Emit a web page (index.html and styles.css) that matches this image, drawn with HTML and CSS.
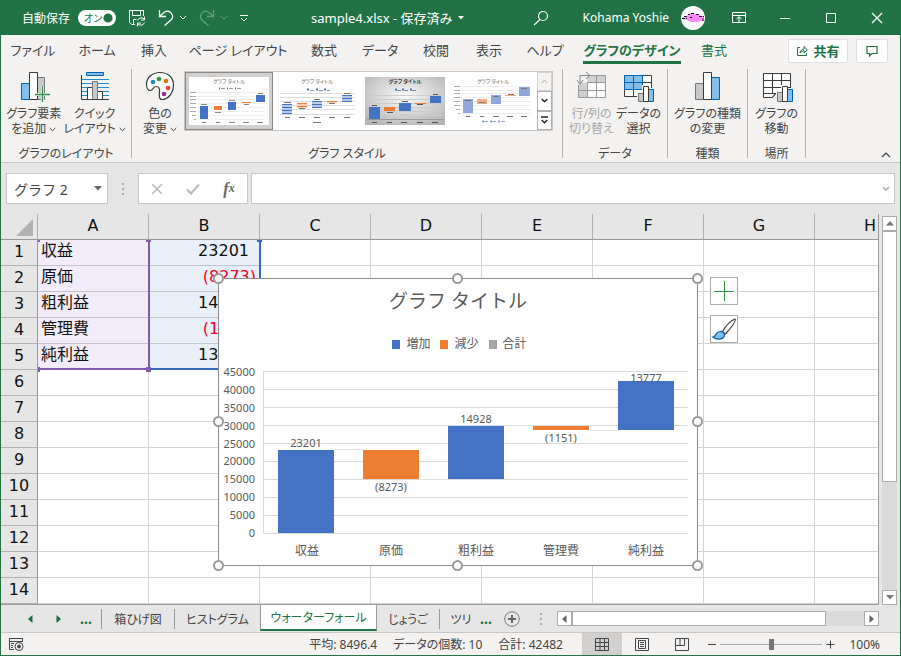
FILE: index.html
```html
<!DOCTYPE html>
<html lang="ja">
<head>
    <meta charset="UTF-8">
    <meta name="viewport" content="width=device-width, initial-scale=1.0">
    <title>sample4.xlsx</title>
    <link rel="stylesheet" href="styles.css">
</head>
<body>
    <div class="window">
        <!-- Title bar -->
        <header class="title-bar">
            <div class="quick-access">
                <label for="autosave">自動保存</label>
                <span class="toggle">
                    <input type="checkbox" id="autosave" checked>
                    <span class="toggle-text">オン</span>
                </span>
                <button class="qa-button" aria-label="上書き保存">
                    <svg width="18" height="18" viewBox="0 0 18 18" fill="none" stroke="#fff">
                        <path d="M7 15.5H3.5L1.500 13.500V1.500H15.500V7M4.500 1.500V6.500H12.500V1.500M5.500 15.500V10.500H8.500"/>
                        <path d="M9.500 11.500A4 4 0 0 1 16.500 10.500M16.500 7.500V11H13M16.500 13.500A4 4 0 0 1 9.500 14.500M9.500 17.500V14H13"/>
                    </svg>
                </button>
                <button class="qa-button undo" aria-label="元に戻す">
                    <svg width="16" height="18" viewBox="0 0 16 18" fill="none" stroke="#fff" stroke-width="1.3">
                        <path d="M1.500 1V7.500H8M1.500 7.500L6 3.500C12 -0.500 17.500 7 12.500 11.500L6.500 16.500"/>
                    </svg>
                    <svg width="8" height="6" viewBox="0 0 8 6" fill="none" stroke="#fff"><path d="M1 1L4 4L7 1"/></svg>
                </button>
                <button class="qa-button redo" aria-label="やり直し" disabled>
                    <svg width="16" height="18" viewBox="0 0 16 18" fill="none" stroke="#fff" stroke-width="1.3">
                        <path d="M14.500 1V7.500H8M14.500 7.500L10 3.500C4 -0.500 -1.500 7 3.500 11.500L9.500 16.500"/>
                    </svg>
                    <svg width="8" height="6" viewBox="0 0 8 6" fill="none" stroke="#fff"><path d="M1 1L4 4L7 1"/></svg>
                </button>
                <button class="qa-button" aria-label="クイック アクセス ツール バーのカスタマイズ">
                    <svg width="8" height="8" viewBox="0 0 8 8" fill="none" stroke="#fff"><path d="M0 1.500H8M1 4L4 7L7 4"/></svg>
                </button>
            </div>
            <button class="doc-title">sample4.xlsx - 保存済み
                <svg width="6" height="4" viewBox="0 0 6 4"><path d="M0 0H6L3 3.500Z" fill="#fff"/></svg>
            </button>
            <div class="window-tools">
                <button class="search" aria-label="検索">
                    <svg width="16" height="16" viewBox="0 0 16 16" fill="none" stroke="#fff" stroke-width="1.200"><circle cx="10" cy="6" r="4.500"/><path d="M7 9.500L1 15"/></svg>
                </button>
                <span class="user-name">Kohama Yoshie</span>
                <svg class="avatar" width="24" height="24" viewBox="0 0 24 24">
                    <circle cx="12" cy="12" r="12" fill="#fff"/>
                    <path d="M1 12L6 10L8 8H16L18 9L23 11V14L17 16H10L6 14L1 13Z" fill="#f8f"/>
                    <path d="M1 12.500H6M3 10.500H7M7 8.500H9M10 7.500H13M15 8.500H19M18 10.500H23M9 11.500H11M22 12.500V15" stroke="#111" fill="none" stroke-dasharray="3 1"/>
                </svg>
                <div class="window-buttons">
                    <button aria-label="リボンの表示オプション">
                        <svg width="14" height="12" viewBox="0 0 14 12" fill="none" stroke="#fff"><path d="M.5 .5H13.500V10.500H.5ZM.5 3.500H13.500M7 10V5M4.500 7L7 4.700L9.500 7"/></svg>
                    </button>
                    <button aria-label="最小化">
                        <svg width="12" height="12" viewBox="0 0 12 12"><path d="M1 6.500H11" stroke="#fff"/></svg>
                    </button>
                    <button aria-label="最大化">
                        <svg width="12" height="12" viewBox="0 0 12 12"><path d="M1.500 1.500H10.500V10.500H1.500Z" fill="none" stroke="#fff"/></svg>
                    </button>
                    <button aria-label="閉じる">
                        <svg width="12" height="12" viewBox="0 0 12 12"><path d="M1 1L11 11M11 1L1 11" stroke="#fff" stroke-width="1.200"/></svg>
                    </button>
                </div>
            </div>
        </header>

        <!-- Ribbon tabs -->
        <nav class="ribbon-tabs">
            <div class="tab-list">
                <button>ファイル</button>
                <button>ホーム</button>
                <button>挿入</button>
                <button>ページ レイアウト</button>
                <button>数式</button>
                <button>データ</button>
                <button>校閲</button>
                <button>表示</button>
                <button>ヘルプ</button>
                <button class="active"><span>グラフのデザイン</span></button>
                <button class="context">書式</button>
            </div>
            <button class="share-button">
                <svg width="13" height="12" viewBox="0 0 13 12" fill="none" stroke="#217346"><path d="M4 2.500H1.500V10.500H10.500V8M4 8C4.500 5 6.500 4 8 4V1.500L11.500 4.800L8 8V6C6.500 6 5 6.500 4 8Z"/></svg>
                共有
            </button>
            <button class="comment-button" aria-label="コメント">
                <svg width="12" height="12" viewBox="0 0 12 12" fill="none" stroke="#217346" stroke-width="1.200"><path d="M1 1.500H11V8.500H6L3.500 11V8.500H1Z"/></svg>
            </button>
        </nav>

        <!-- Ribbon -->
        <section class="ribbon">
            <div class="group group-layout">
                <div class="group-body">
                    <button class="big-button">
                        <svg width="32" height="32" viewBox="0 0 32 32">
                            <path d="M19.500 6.500H26.500V28.500H19.500Z" fill="#c8c8c8" stroke="#777"/>
                            <path d="M3.500 12.500H11.500V28.500H3.500Z" fill="#83beec" stroke="#0063b1"/>
                            <path d="M11.500 1.500H19.500V28.500H11.500Z" fill="#fff" stroke="#3a3a38"/>
                            <path d="M24.500 15V31M17 23.500H32" stroke="#f3f2f1" stroke-width="3"/>
                            <path d="M24.500 15V31M17 23.500H32" stroke="#309048" stroke-width="1.300"/>
                        </svg>
                        <span>グラフ要素<br>を追加 <svg class="chev" width="7" height="5" viewBox="0 0 7 5"><path d="M.7 1L3.500 3.700L6.300 1"/></svg></span>
                    </button>
                    <button class="big-button">
                        <svg width="32" height="32" viewBox="0 0 32 32">
                            <path d="M7.500 1.500H24.500V4.500H7.500Z" fill="#83beec" stroke="#0063b1"/>
                            <path d="M3 8.500H30M3 12.500H30M3 16.500H30M3 20.500H30M3 24.500H30" stroke="#1e8bcd"/>
                            <path d="M8.500 16.500H13.500V28.500H8.500ZM18.500 20.500H23.500V28.500H18.500Z" fill="#fff" stroke="#3a3a38"/>
                            <path d="M13.500 10.500H18.500V28.500H13.500Z" fill="#c8c8c8" stroke="#777"/>
                            <path d="M2.500 4V28.500H30" fill="none" stroke="#3a3a38"/>
                        </svg>
                        <span>クイック<br>レイアウト <svg class="chev" width="7" height="5" viewBox="0 0 7 5"><path d="M.7 1L3.500 3.700L6.300 1"/></svg></span>
                    </button>
                </div>
                <div class="group-name">グラフのレイアウト</div>
            </div>

            <div class="group group-styles">
                <div class="group-body">
                    <button class="big-button">
                        <svg width="32" height="32" viewBox="0 0 32 32">
                            <path d="M16 1.500C8 1.500 2.500 7 2.500 13C2.500 18 4 19.500 6.500 19.500C9 19.500 9 15.500 12 15.500C15 15.500 16 18 15.500 21C15 25 15 28.500 18 28.500C24 28.500 29.500 22 29.500 14C29.500 6.500 24 1.500 16 1.500Z" fill="#fff" stroke="#3a3a38" stroke-width="1.200"/>
                            <circle cx="9" cy="11" r="2.300" fill="#1e8bcd"/>
                            <circle cx="15" cy="8" r="2.300" fill="#309048"/>
                            <circle cx="22" cy="10" r="2.300" fill="#e07000"/>
                            <circle cx="24" cy="17" r="2.300" fill="#ed3d3b"/>
                            <circle cx="20" cy="23" r="2.300" fill="#92319e"/>
                        </svg>
                        <span>色の<br>変更 <svg class="chev" width="7" height="5" viewBox="0 0 7 5"><path d="M.7 1L3.500 3.700L6.300 1"/></svg></span>
                    </button>
                    <div class="gallery">
                        <button class="style-thumb selected" aria-label="スタイル 1">
                            <svg width="80" height="48" viewBox="0 0 80 48">
                                <rect width="80" height="48" fill="#fff"/>
                                <path d="M8 15.500H76M8 19.500H76M8 22.500H76M8 26.500H76M8 30.500H76M8 34.500H76M8 38.500H76M8 42.500H76" stroke="#eee"/>
                                <path d="M1 15.500H7M1 19.500H7M1 22.500H7M1 26.500H7M1 30.500H7M1 34.500H7M3 38.500H7M5 42.500H7" stroke="#aaa"/>
                                <path d="M11 29H19V42H11ZM39 25H47V33H39ZM67 18H76V25H67Z" fill="#4472c4"/>
                                <path d="M25 29H33V33H25ZM53 25H62V26H53Z" fill="#ed7d31"/>
                                <path d="M12 27.500H18M26 35.500H32M40 23.500H46M55 27.500H60M69 16.500H74M13 45.500H17M27 45.500H31M40 45.500H46M54 45.500H60M68 45.500H74" stroke="#888"/>
                                <path d="M30 11.500H31M38 11.500H39M46 11.500H47" stroke="#4472c4" stroke-width="2"/>
                                <path d="M32 11.500H36M40 11.500H44M48 11.500H52" stroke="#999"/>
                                <text class="thumb-title" x="40" y="6">グラフ タイトル</text>
                            </svg>
                        </button>
                        <button class="style-thumb" aria-label="スタイル 2">
                            <svg width="80" height="48" viewBox="0 0 80 48">
                                <rect width="80" height="48" fill="#fff"/>
                                <path d="M3 16.500H78M3 20.500H78M3 24.500H78M3 28.500H78M3 32.500H78M3 37.500H78" stroke="#ddd"/>
                                <path d="M5 27H15V37H5ZM35 24H45V31H35ZM65 18H75V25H65Z" fill="#b9c8ea"/>
                                <path d="M20 26H30V31H20ZM50 24H60V26H50Z" fill="#f9cfb5"/>
                                <path d="M5 27.500H15M5 30.500H15M5 33.500H15M5 36.500H15M35 24.500H45M35 27.500H45M35 30.500H45M65 18.500H75M65 21.500H75M65 24.500H75" stroke="#4472c4"/>
                                <path d="M20 26.500H30M20 29.500H30M50 24.500H60" stroke="#ed7d31"/>
                                <path d="M7 25.500H14M22 31.500H28M37 22.500H43M52 26.500H58M67 16.500H73M8 40.500H13M22 40.500H28M37 40.500H43M52 40.500H58M67 40.500H73M36 45.500H44" stroke="#777"/>
                                <path d="M30 12.500H32M39 12.500H41M47 12.500H49" stroke="#4472c4" stroke-width="2"/>
                                <path d="M33 13.500H37M42 13.500H46M50 13.500H53" stroke="#999"/>
                                <text class="thumb-title" x="40" y="6">グラフ タイトル</text>
                            </svg>
                        </button>
                        <button class="style-thumb" aria-label="スタイル 3">
                            <svg width="80" height="48" viewBox="0 0 80 48">
                                <defs>
                                    <radialGradient id="thumbShade" cx="50%" cy="40%" r="70%">
                                        <stop offset="0" stop-color="#fafafa"/>
                                        <stop offset="1" stop-color="#b4b4b4"/>
                                    </radialGradient>
                                </defs>
                                <rect width="80" height="48" fill="url(#thumbShade)"/>
                                <path d="M4 18.500H78M4 22.500H78M4 26.500H78M4 30.500H78M4 34.500H78M4 38.500H78" stroke="#ccc"/>
                                <path d="M2 42.500H79" stroke="#999"/>
                                <path d="M4 30H15V42H4ZM34 26H46V34H34ZM65 19H76V26H65Z" fill="#4472c4"/>
                                <path d="M19 30H30V34H19ZM50 26H61V27H50Z" fill="#ed7d31"/>
                                <path d="M7 28.500H12M22 35.500H28M37 24.500H43M52 27.500H58M68 17.500H73M7 45.500H12M22 45.500H27M36 45.500H42M52 45.500H58M67 45.500H73" stroke="#555"/>
                                <path d="M30 12.500H32M37 12.500H39M45 12.500H47" stroke="#4472c4" stroke-width="2"/>
                                <path d="M32 13.500H36M39 13.500H43M47 13.500H51" stroke="#888"/>
                                <text class="thumb-title strong" x="40" y="6">グラフ タイトル</text>
                            </svg>
                        </button>
                        <button class="style-thumb" aria-label="スタイル 4">
                            <svg width="80" height="48" viewBox="0 0 80 48">
                                <rect width="80" height="48" fill="#fff"/>
                                <path d="M8 9.500H78M8 13.500H78M8 16.500H78M8 20.500H78M8 24.500H78M8 28.500H78M8 32.500H78M8 36.500H78" stroke="#eee"/>
                                <path d="M1 9.500H7M1 13.500H7M1 16.500H7M1 20.500H7M1 24.500H7M1 28.500H7M3 32.500H7M5 36.500H7" stroke="#aaa"/>
                                <path d="M10 22H20V36H10ZM38 18H48V27H38ZM66 10H77V19H66Z" fill="#8fa7dc"/>
                                <path d="M24 22H34V27H24ZM52 18H63V19H52Z" fill="#f6a983"/>
                                <path d="M12 23.500H18M26 25.500H32M40 19.500H46M55 17.500H61M68 11.500H74M13 39.500H17M27 39.500H31M40 39.500H46M54 39.500H60M68 39.500H74" stroke="#777"/>
                                <path d="M29 44.500H31M37 44.500H39M45 44.500H47" stroke="#8fa7dc" stroke-width="2"/>
                                <path d="M31 44.500H35M39 44.500H43M48 44.500H52" stroke="#aaa"/>
                                <text class="thumb-title" x="40" y="6">グラフ タイトル</text>
                            </svg>
                        </button>
                        <div class="gallery-scroll">
                            <button aria-label="上へ" disabled><svg width="7" height="5" viewBox="0 0 7 5" fill="none" stroke="#aaa"><path d="M.7 4L3.500 1L6.300 4"/></svg></button>
                            <button aria-label="下へ"><svg width="7" height="5" viewBox="0 0 7 5" fill="none" stroke="#222" stroke-width="1.400"><path d="M.7 1L3.500 3.700L6.300 1"/></svg></button>
                            <button aria-label="その他"><svg width="7" height="8" viewBox="0 0 7 8" fill="none" stroke="#222" stroke-width="1.400"><path d="M0 1H7M.7 4L3.500 6.700L6.300 4"/></svg></button>
                        </div>
                    </div>
                </div>
                <div class="group-name">グラフ スタイル</div>
            </div>

            <div class="group group-data">
                <div class="group-body">
                    <button class="big-button" disabled>
                        <svg width="32" height="32" viewBox="0 0 32 32">
                            <path d="M3.500 11.500H30.500V26.500H3.500Z" fill="#fafafa"/>
                            <path d="M12.500 4.500H30.500V11.500H12.500ZM3.500 11.500H12.500V26.500H3.500Z" fill="#d2d0ce"/>
                            <path d="M14 4.500H30.500V26.500H3.500V14M12.500 11.500H30.500M3.500 19.500H30.500M12.500 11V26.500M21.500 4.500V26.500" fill="none" stroke="#999"/>
                            <path d="M2 9L5 13L8 9M5 12V4.500H14M11 1L15 4.500L11 8" fill="none" stroke="#888"/>
                        </svg>
                        <span>行/列の<br>切り替え</span>
                    </button>
                    <button class="big-button">
                        <svg width="32" height="32" viewBox="0 0 32 32">
                            <path d="M2.500 4.500H29.500V25.500H2.500Z" fill="#fff" stroke="#3a3a38"/>
                            <path d="M20.500 4.500V25M2.500 18.500H29.500M20.500 11.500H29.500M11.500 18.500V25" stroke="#3a3a38"/>
                            <path d="M2.500 4.500H20.500V18.500H2.500ZM2.500 11.500H20.500M11.500 4.500V18.500" fill="#83beec" stroke="#0063b1"/>
                            <path d="M15 21H20V14H27V17H32V32H15Z" fill="#f3f2f1"/>
                            <path d="M16.500 22.500H21.500V30.500H16.500Z" fill="#c8c8c8" stroke="#777"/>
                            <path d="M26.500 18.500H31.500V30.500H26.500Z" fill="#83beec" stroke="#0063b1"/>
                            <path d="M21.500 15.500H26.500V30.500H21.500Z" fill="#fff" stroke="#3a3a38"/>
                        </svg>
                        <span>データの<br>選択</span>
                    </button>
                </div>
                <div class="group-name">データ</div>
            </div>

            <div class="group group-kind">
                <div class="group-body">
                    <button class="big-button">
                        <svg width="32" height="32" viewBox="0 0 32 32">
                            <path d="M3.500 12.500H11.500V28.500H3.500Z" fill="#c8c8c8" stroke="#777"/>
                            <path d="M19.500 6.500H27.500V28.500H19.500Z" fill="#83beec" stroke="#0063b1"/>
                            <path d="M11.500 1.500H19.500V28.500H11.500Z" fill="#fff" stroke="#3a3a38"/>
                        </svg>
                        <span>グラフの種類<br>の変更</span>
                    </button>
                </div>
                <div class="group-name">種類</div>
            </div>

            <div class="group group-place">
                <div class="group-body">
                    <button class="big-button">
                        <svg width="32" height="32" viewBox="0 0 32 32">
                            <path d="M2.500 2.500H29.500V22.500H14.500L11.500 26.500H2.500Z" fill="#fff" stroke="#3a3a38"/>
                            <path d="M11.500 2.500V22.500M20.500 2.500V22.500M2.500 9.500H29.500M2.500 16.500H29.500M2.500 22.500H14.500L11.500 26.500" fill="none" stroke="#3a3a38"/>
                            <path d="M15 20H20V14H27V17H32V32H15Z" fill="#f3f2f1"/>
                            <path d="M16.500 21.500H21.500V30.500H16.500Z" fill="#c8c8c8" stroke="#777"/>
                            <path d="M26.500 18.500H31.500V30.500H26.500Z" fill="#83beec" stroke="#0063b1"/>
                            <path d="M21.500 15.500H26.500V30.500H21.500Z" fill="#fff" stroke="#3a3a38"/>
                        </svg>
                        <span>グラフの<br>移動</span>
                    </button>
                </div>
                <div class="group-name">場所</div>
            </div>
            <button class="collapse" aria-label="リボンを折りたたむ">
                <svg width="10" height="6" viewBox="0 0 10 6" fill="none" stroke="#444" stroke-width="1.200"><path d="M1 5L5 1L9 5"/></svg>
            </button>
        </section>

        <!-- Formula bar -->
        <div class="formula-bar">
            <div class="name-box">
                <input type="text" value="グラフ 2" aria-label="名前ボックス">
                <button aria-label="名前の一覧"><svg width="8" height="5" viewBox="0 0 8 5"><path d="M0 0H8L4 4.500Z" fill="#666"/></svg></button>
            </div>
            <span class="grip"></span>
            <div class="formula-buttons">
                <button aria-label="キャンセル" disabled><svg width="12" height="12" viewBox="0 0 12 12"><path d="M1 1L11 11M11 1L1 11" stroke="#bbb" stroke-width="1.600"/></svg></button>
                <button aria-label="入力" disabled><svg width="14" height="12" viewBox="0 0 14 12"><path d="M1 6.500L5 10.500L13 1.500" fill="none" stroke="#bbb" stroke-width="2.200"/></svg></button>
                <button class="fx" aria-label="関数の挿入">f<small>x</small></button>
            </div>
            <div class="formula-box">
                <input type="text" aria-label="数式バー">
                <button aria-label="数式バーの展開"><svg width="8" height="6" viewBox="0 0 8 6"><path d="M1 1L4 4L7 1" fill="none" stroke="#bbb" stroke-width="1.800"/></svg></button>
            </div>
        </div>

        <!-- Sheet -->
        <main class="work-area">
            <div class="sheet">
                <table class="cells">
                    <thead>
                        <tr><th class="corner"><svg width="18" height="18" viewBox="0 0 18 18"><path d="M17 0V17H0Z" fill="#b2b2b2"/></svg></th><th>A</th><th>B</th><th>C</th><th>D</th><th>E</th><th>F</th><th>G</th><th>H</th></tr>
                    </thead>
                    <tbody>
                        <tr><th>1</th><td class="label">収益</td><td class="value">23201</td><td></td><td></td><td></td><td></td><td></td><td></td></tr>
                        <tr><th>2</th><td class="label">原価</td><td class="value minus">(8273)</td><td></td><td></td><td></td><td></td><td></td><td></td></tr>
                        <tr><th>3</th><td class="label">粗利益</td><td class="value">14928</td><td></td><td></td><td></td><td></td><td></td><td></td></tr>
                        <tr><th>4</th><td class="label">管理費</td><td class="value minus">(1151)</td><td></td><td></td><td></td><td></td><td></td><td></td></tr>
                        <tr><th>5</th><td class="label">純利益</td><td class="value">13777</td><td></td><td></td><td></td><td></td><td></td><td></td></tr>
                        <tr><th>6</th><td></td><td></td><td></td><td></td><td></td><td></td><td></td><td></td></tr>
                        <tr><th>7</th><td></td><td></td><td></td><td></td><td></td><td></td><td></td><td></td></tr>
                        <tr><th>8</th><td></td><td></td><td></td><td></td><td></td><td></td><td></td><td></td></tr>
                        <tr><th>9</th><td></td><td></td><td></td><td></td><td></td><td></td><td></td><td></td></tr>
                        <tr><th>10</th><td></td><td></td><td></td><td></td><td></td><td></td><td></td><td></td></tr>
                        <tr><th>11</th><td></td><td></td><td></td><td></td><td></td><td></td><td></td><td></td></tr>
                        <tr><th>12</th><td></td><td></td><td></td><td></td><td></td><td></td><td></td><td></td></tr>
                        <tr><th>13</th><td></td><td></td><td></td><td></td><td></td><td></td><td></td><td></td></tr>
                        <tr><th>14</th><td></td><td></td><td></td><td></td><td></td><td></td><td></td><td></td></tr>
                    </tbody>
                </table>

                <!-- Source ranges of the chart -->
                <svg class="ranges" width="226" height="133" viewBox="0 0 226 133">
                    <path d="M112 129H222V2" fill="none" stroke="#3469c0" stroke-width="2"/>
                    <path d="M219 0H224V2H219Z" fill="#3469c0"/>
                    <path d="M1 129H111V2" fill="none" stroke="#8259b4" stroke-width="2"/>
                    <path d="M0 0H2V2H0ZM108 0H113V2H108ZM0 127H2V132H0ZM108 127H113V132H108Z" fill="#8259b4"/>
                </svg>

                <!-- Chart object -->
                <div class="chart">
                    <h2 class="chart-title">グラフ タイトル</h2>
                    <ul class="legend">
                        <li class="up">増加</li>
                        <li class="down">減少</li>
                        <li class="total">合計</li>
                    </ul>
                    <svg class="plot" width="478" height="204" viewBox="219 361 478 204">
                        <path d="M263 371.500H688M263 389.500H688M263 407.500H688M263 425.500H688M263 443.500H688M263 461.500H688M263 479.500H688M263 497.500H688M263 515.500H688M263 533.500H688M263.500 371V534" stroke="#d9d9d9"/>
                        <path d="M334 449.500H363M419 479.500H448M504 425.500H533M589 430.500H618" stroke="#e0e0e0"/>
                        <g class="axis">
                            <text x="255" y="376">45000</text>
                            <text x="255" y="394">40000</text>
                            <text x="255" y="412">35000</text>
                            <text x="255" y="430">30000</text>
                            <text x="255" y="448">25000</text>
                            <text x="255" y="465">20000</text>
                            <text x="255" y="483">15000</text>
                            <text x="255" y="501">10000</text>
                            <text x="255" y="519">5000</text>
                            <text x="255" y="537">0</text>
                        </g>
                        <g fill="#4472c4">
                            <rect x="278" y="450" width="56" height="83"/>
                            <rect x="448" y="426" width="56" height="53"/>
                            <rect x="618" y="381" width="56" height="49"/>
                        </g>
                        <g fill="#ed7d31">
                            <rect x="363" y="450" width="56" height="29"/>
                            <rect x="533" y="426" width="56" height="4"/>
                        </g>
                        <g class="data-labels">
                            <text x="306" y="447">23201</text>
                            <text x="391" y="491">(8273)</text>
                            <text x="476" y="423">14928</text>
                            <text x="561" y="442">(1151)</text>
                            <text x="646" y="382">13777</text>
                        </g>
                        <g class="categories">
                            <text x="307" y="555">収益</text>
                            <text x="391" y="555">原価</text>
                            <text x="476" y="555">粗利益</text>
                            <text x="561" y="555">管理費</text>
                            <text x="646" y="555">純利益</text>
                        </g>
                    </svg>
                    <span class="handle top left"></span>
                    <span class="handle top center"></span>
                    <span class="handle top right"></span>
                    <span class="handle middle left"></span>
                    <span class="handle middle right"></span>
                    <span class="handle bottom left"></span>
                    <span class="handle bottom center"></span>
                    <span class="handle bottom right"></span>
                    <div class="chart-buttons">
                        <button aria-label="グラフ要素">
                            <svg width="22" height="22" viewBox="0 0 22 22"><path d="M11.500 1V21M1 11.500H21" stroke="#309048"/></svg>
                        </button>
                        <button aria-label="グラフ スタイル">
                            <svg width="26" height="26" viewBox="0 0 26 26">
                                <path d="M11.500 15.500C15 9.500 19 5 24 3C24.800 4 23.500 8 14.500 18Z" fill="#fff" stroke="#444" stroke-width="1.200"/>
                                <path d="M2 21C5 21 4.500 16 8.500 15.500C11 15 14 17 13.500 19.500C12.500 23.500 5.500 24.500 2 21Z" fill="#83beec" stroke="#0063b1" stroke-width="1.200"/>
                            </svg>
                        </button>
                    </div>
                </div>
            </div>

            <div class="v-scroll">
                <button aria-label="上へスクロール"><svg width="8" height="5" viewBox="0 0 8 5"><path d="M0 4.500H8L4 0Z" fill="#777"/></svg></button>
                <div class="track"><div class="thumb"></div></div>
                <button aria-label="下へスクロール"><svg width="8" height="5" viewBox="0 0 8 5"><path d="M0 0H8L4 4.500Z" fill="#777"/></svg></button>
            </div>
        </main>

        <!-- Sheet tabs -->
        <div class="sheet-bar">
            <div class="sheet-nav">
                <button aria-label="前のシート"><svg width="5" height="8" viewBox="0 0 5 8"><path d="M4.500 0V8L0 4Z" fill="#1b6b3a"/></svg></button>
                <button aria-label="次のシート"><svg width="5" height="8" viewBox="0 0 5 8"><path d="M.5 0V8L5 4Z" fill="#1b6b3a"/></svg></button>
                <button class="dots">...</button>
            </div>
            <button class="sheet-tab tab-box">箱ひげ図</button>
            <button class="sheet-tab tab-hist">ヒストグラム</button>
            <button class="sheet-tab tab-water active">ウォーターフォール</button>
            <button class="sheet-tab tab-funnel">じょうご</button>
            <button class="sheet-tab tab-tree">ツリ</button>
            <button class="dots">...</button>
            <button class="add-sheet" aria-label="新しいシート">
                <svg width="16" height="16" viewBox="0 0 16 16"><circle cx="8" cy="8" r="7.300" fill="none" stroke="#777"/><path d="M8 4V12M4 8H12" stroke="#666" stroke-width="2"/></svg>
            </button>
            <span class="grip"></span>
            <div class="h-scroll">
                <button aria-label="左へスクロール"><svg width="5" height="8" viewBox="0 0 5 8"><path d="M4.500 0V8L0 4Z" fill="#666"/></svg></button>
                <div class="track"><div class="thumb"></div></div>
                <button aria-label="右へスクロール"><svg width="5" height="8" viewBox="0 0 5 8"><path d="M.5 0V8L5 4Z" fill="#666"/></svg></button>
            </div>
        </div>

        <!-- Status bar -->
        <footer class="status-bar">
            <button class="macro" aria-label="マクロの記録">
                <svg width="15" height="13" viewBox="0 0 15 13" fill="none" stroke="#444"><path d="M5 11.500H.5V.5H13.500V4M.5 3.500H13.500M2 5.500H5M2 7.500H4M2 9.500H4"/><circle cx="10" cy="8.500" r="4"/><circle cx="10" cy="8.500" r="1.500" fill="#444"/></svg>
            </button>
            <div class="stats">
                <span>平均: 8496.4</span>
                <span>データの個数: 10</span>
                <span>合計: 42482</span>
            </div>
            <div class="views">
                <button class="active" aria-label="標準"><svg width="14" height="13" viewBox="0 0 14 13" fill="none" stroke="#444"><path d="M.5 .5H13.500V12.500H.5ZM.5 4.500H13.500M.5 8.500H13.500M5 .5V12.500M9.500 .5V12.500"/></svg></button>
                <button aria-label="ページ レイアウト"><svg width="14" height="13" viewBox="0 0 14 13" fill="none" stroke="#444"><path d="M.5 .5H13.500V12.500H.5ZM3.500 2.500H10.500V10.500H3.500ZM5 4.500H9M5 6.500H9M5 8.500H9"/></svg></button>
                <button aria-label="改ページ プレビュー"><svg width="14" height="13" viewBox="0 0 14 13" fill="none" stroke="#444"><path d="M.5 .5H13.500V12.500H.5ZM.5 7.500H9.500M5 .5V7.500M9.500 .5V7.500"/></svg></button>
            </div>
            <div class="zoom">
                <button aria-label="縮小"><svg width="8" height="8" viewBox="0 0 8 8"><path d="M0 4.500H8" stroke="#444"/></svg></button>
                <input type="range" min="10" max="190" value="100" aria-label="ズーム">
                <button aria-label="拡大"><svg width="9" height="9" viewBox="0 0 9 9"><path d="M.5 4.500H8.500M4.500 .5V8.500" stroke="#444"/></svg></button>
                <span>100%</span>
            </div>
        </footer>
    </div>
</body>
</html>
```
FILE: styles.css
```css
* {
    box-sizing: border-box;
}

body {
    margin: 0;
    font-family: "Noto Sans", "Noto Sans CJK JP", sans-serif;
    font-size: 12px;
    color: #444;
}

button, input {
    font: inherit;
    color: inherit;
    margin: 0;
}

button {
    display: flex;
    align-items: center;
    justify-content: center;
    padding: 0;
    border: none;
    background: none;
    white-space: nowrap;
}

.window {
    display: flex;
    flex-direction: column;
    height: 100vh;
    border: 1px solid #217346;
    border-top: none;
    background: #e6e6e6;
    overflow: hidden;
    font-feature-settings: "palt";
}

/* Title bar */
.title-bar {
    display: flex;
    align-items: center;
    height: 35px;
    padding-left: 21px;
    background: #217346;
    color: #fff;
    flex-shrink: 0;
}

.quick-access {
    display: flex;
    align-items: center;
    width: 289px;
    gap: 12px;
}

.toggle {
    position: relative;
    display: flex;
    margin-left: -4px;
}

.toggle input {
    appearance: none;
    width: 38px;
    height: 16px;
    border-radius: 8px;
    background: radial-gradient(circle at 30px 8px, #217346 4px, #fff 5px);
}

.toggle-text {
    position: absolute;
    left: 6px;
    top: 0;
    font-size: 10px;
    line-height: 16px;
    color: #217346;
    pointer-events: none;
}

.qa-button {
    gap: 5px;
}

.redo {
    opacity: 0.3;
}

.doc-title {
    font-size: 13px;
    gap: 6px;
}

.window-tools {
    display: flex;
    align-items: center;
    margin-left: auto;
}

.search {
    margin-right: 34px;
}

.user-name {
    margin-right: 12px;
}

.window-buttons {
    display: flex;
    margin-left: 11px;
}

.window-buttons button {
    width: 46px;
    height: 35px;
}

/* Ribbon tabs */
.ribbon-tabs {
    display: flex;
    align-items: center;
    height: 31px;
    padding-right: 12px;
    gap: 8px;
    background: #f3f2f1;
    font-size: 13px;
    flex-shrink: 0;
}

.tab-list {
    display: grid;
    grid-template-columns: 64px 64px 50px 118px 54px 58px 54px 52px 60px 114px 50px;
    height: 29px;
    align-self: flex-start;
    margin-right: auto;
}

.tab-list .active {
    font-weight: bold;
    color: #217346;
}

.tab-list .active span {
    border-bottom: 3px solid #217346;
    line-height: 22px;
    padding-top: 3px;
}

.tab-list .context {
    color: #217346;
}

.share-button, .comment-button {
    height: 24px;
    border: 1px solid #e1dfdd;
    border-radius: 2px;
    background: #fff;
    color: #217346;
}

.share-button {
    width: 60px;
    gap: 4px;
    font-weight: bold;
}

.comment-button {
    width: 32px;
}

/* Ribbon */
.ribbon {
    display: flex;
    height: 97px;
    padding: 3px 9px 4px 0;
    background: #f3f2f1;
    border-bottom: 1px solid #c8c6c4;
    flex-shrink: 0;
}

.group {
    display: flex;
    flex-direction: column;
    justify-content: space-between;
    border-right: 1px solid #b3b0ad;
}

.group-layout { width: 131px; }
.group-styles { width: 431px; }
.group-data { width: 105px; }
.group-kind { width: 80px; }
.group-place { width: 58px; }

.group-body {
    display: flex;
    justify-content: center;
    gap: 2px;
}

.group-styles .group-body {
    justify-content: flex-start;
    padding-left: 6px;
}

.group-name {
    text-align: center;
    line-height: 8px;
}

.big-button {
    flex-direction: column;
    justify-content: flex-start;
    gap: 3px;
    min-width: 44px;
    padding-top: 2px;
    line-height: 15px;
}

.big-button:disabled {
    color: #a8a6a4;
}

.chev {
    fill: none;
    stroke: #444;
    vertical-align: middle;
}

.gallery {
    display: flex;
    width: 369px;
    height: 60px;
    margin-top: 2px;
    border: 1px solid #c8c6c4;
    background: #fff;
}

.style-thumb {
    width: 88px;
    height: 58px;
}

.style-thumb.selected {
    border: 1px solid #8a8886;
    background: #d2d0ce;
}

.thumb-title {
    font-size: 5px;
    fill: #666;
    text-anchor: middle;
}

.thumb-title.strong {
    font-weight: bold;
    fill: #333;
}

.gallery-scroll {
    display: grid;
    grid-template-rows: 1fr 1fr 1fr;
    width: 15px;
    margin-left: auto;
}

.gallery-scroll button {
    border: 1px solid #b3b0ad;
    background: #fff;
}

.gallery-scroll button:disabled {
    background: #f3f2f1;
    border-color: #d2d0ce;
}

.collapse {
    margin-left: auto;
    align-self: flex-end;
}

/* Formula bar */
.formula-bar {
    display: flex;
    align-items: center;
    height: 51px;
    padding: 0 5px;
    flex-shrink: 0;
}

.name-box, .formula-buttons, .formula-box {
    display: flex;
    height: 31px;
    border: 1px solid #c6c6c6;
    background: #fff;
}

.name-box {
    width: 102px;
    padding: 0 5px 0 7px;
    font-size: 14px;
    font-feature-settings: normal;
}

.name-box input, .formula-box input {
    flex: 1;
    min-width: 0;
    padding: 0;
    border: none;
    background: none;
    outline: none;
}

.grip {
    width: 2px;
    height: 12px;
    background: repeating-linear-gradient(#aaa 0 2px, transparent 2px 5px);
}

.formula-bar .grip {
    margin: 0 14px;
}

.formula-buttons {
    width: 110px;
    margin-right: 3px;
}

.formula-buttons button {
    flex: 1;
}

.formula-buttons .fx {
    font-family: "Liberation Serif", serif;
    font-style: italic;
    font-weight: bold;
    font-size: 16px;
    color: #666;
}

.fx small {
    font-size: 12px;
}

.formula-box {
    flex: 1;
    padding-right: 4px;
}

/* Sheet */
.work-area {
    display: flex;
    flex: 1;
    min-height: 0;
    padding-right: 3px;
    gap: 3px;
}

.sheet {
    position: relative;
    flex: 1;
    overflow: hidden;
    border-right: 1px solid #999;
    border-bottom: 1px solid #999;
    background: #fff;
    font-feature-settings: normal;
}

.cells {
    table-layout: fixed;
    width: 925px;
    border-collapse: separate;
    border-spacing: 0;
    font-family: "DejaVu Sans", "Noto Sans CJK JP", sans-serif;
    font-size: 16px;
    line-height: 20px;
    color: #111;
}

.cells th, .cells td {
    height: 26px;
    padding: 0 2px 3px;
    border-right: 1px solid #d4d4d4;
    border-bottom: 1px solid #d4d4d4;
    white-space: nowrap;
}

.cells th {
    padding-bottom: 1px;
    background: #e6e6e6;
    font-weight: normal;
    border-color: #b0b0b0;
}

.cells thead th {
    padding-bottom: 2px;
    border-bottom-color: #999;
}

.cells tbody th {
    border-right-color: #999;
}

.cells .corner {
    width: 37px;
    padding: 2px 3px 0 0;
    text-align: right;
    line-height: 1px;
}

.cells .label {
    padding-left: 3px;
    background: #f1ecf8;
    border-bottom-color: #c5c1cc;
}

.cells .value {
    padding-right: 10px;
    background: #e8eff8;
    text-align: right;
    border-bottom-color: #bdc5d0;
}

.cells .minus {
    padding-right: 3px;
    color: #f0002a;
}

.ranges {
    position: absolute;
    left: 37px;
    top: 26px;
}

/* Chart */
.chart {
    position: absolute;
    left: 217px;
    top: 64px;
    width: 480px;
    height: 288px;
    border: 1px solid #8c8c8c;
    background: #fff;
    color: #595959;
}

.chart-title {
    margin: 0;
    padding-top: 8px;
    font-size: 19px;
    font-weight: normal;
    line-height: 28px;
    text-align: center;
}

.legend {
    display: flex;
    justify-content: center;
    gap: 10px;
    margin: 20px 0 8px;
    padding: 0 0 0 3px;
    list-style: none;
    line-height: 18px;
}

.legend li {
    display: flex;
    align-items: center;
    gap: 6px;
}

.legend li::before {
    content: "";
    width: 8px;
    height: 9px;
    background: #4472c4;
}

.legend .down::before { background: #ed7d31; }
.legend .total::before { background: #a5a5a5; }

.plot {
    display: block;
    fill: #595959;
    font-size: 11px;
}

.axis {
    text-anchor: end;
}

.data-labels, .categories {
    text-anchor: middle;
}

.categories {
    font-size: 12px;
}

.handle {
    position: absolute;
    width: 11px;
    height: 11px;
    border: 2px solid #999;
    border-radius: 50%;
    background: #fff;
}

.handle.top { top: -6px; }
.handle.middle { top: 137px; }
.handle.bottom { bottom: -6px; }
.handle.left { left: -6px; }
.handle.center { left: 233px; }
.handle.right { right: -6px; }

.chart-buttons {
    position: absolute;
    left: 491px;
    top: -2px;
    display: flex;
    flex-direction: column;
    gap: 10px;
}

.chart-buttons button {
    width: 28px;
    height: 28px;
    border: 1px solid #ababab;
    background: #fff;
}

/* Scroll bars */
.v-scroll {
    display: flex;
    flex-direction: column;
    width: 15px;
    padding-top: 2px;
}

.v-scroll button, .h-scroll button {
    width: 15px;
    height: 15px;
    border: 1px solid #ababab;
    background: #fff;
    flex-shrink: 0;
}

.track {
    flex: 1;
    background: #dadada;
}

.thumb {
    border: 1px solid #ababab;
    background: #fff;
}

.v-scroll .thumb {
    height: 70%;
}

/* Sheet tabs */
.sheet-bar {
    display: flex;
    align-items: center;
    height: 27px;
    padding-right: 21px;
    flex-shrink: 0;
}

.sheet-nav {
    display: flex;
    width: 100px;
    padding-left: 15px;
}

.sheet-nav button {
    width: 28px;
}

.dots {
    width: 28px;
    font-size: 14px;
    font-weight: bold;
    line-height: 14px;
    color: #1b6b3a;
}

.sheet-tab {
    height: 20px;
    border-left: 1px solid #999;
}

.sheet-tab.active {
    align-self: flex-start;
    height: 26px;
    border-right: 1px solid #999;
    border-bottom: 2px solid #217346;
    background: #fff;
    color: #217346;
}

.tab-box { width: 73px; }
.tab-hist { width: 86px; }
.tab-water { width: 117px; }
.tab-funnel { width: 62px; border-left: none; }
.tab-tree { width: 33px; padding-left: 10px; }

.add-sheet {
    width: 24px;
}

.sheet-bar .grip {
    margin: 0 15px 0 16px;
}

.h-scroll {
    display: flex;
    flex: 1;
}

.h-scroll .thumb {
    width: 87%;
    height: 15px;
}

/* Status bar */
.status-bar {
    display: flex;
    align-items: center;
    height: 23px;
    padding: 0 20px 0 8px;
    border-top: 1px solid #c8c6c4;
    background: #f3f2f1;
    flex-shrink: 0;
}

.stats {
    display: flex;
    gap: 16px;
    margin: 0 19px 0 auto;
}

.views {
    display: flex;
    align-self: stretch;
}

.views button {
    width: 40px;
}

.views .active {
    background: #d2d0ce;
}

.zoom {
    display: flex;
    align-items: center;
    gap: 4px;
    margin-left: 6px;
}

.zoom input {
    appearance: none;
    width: 102px;
    height: 12px;
    background: linear-gradient(#aaa, #aaa) center / 100% 1px no-repeat;
}

.zoom input::-webkit-slider-thumb {
    appearance: none;
    width: 5px;
    height: 11px;
    background: #777;
}

.zoom span {
    width: 41px;
    text-align: right;
}
```
